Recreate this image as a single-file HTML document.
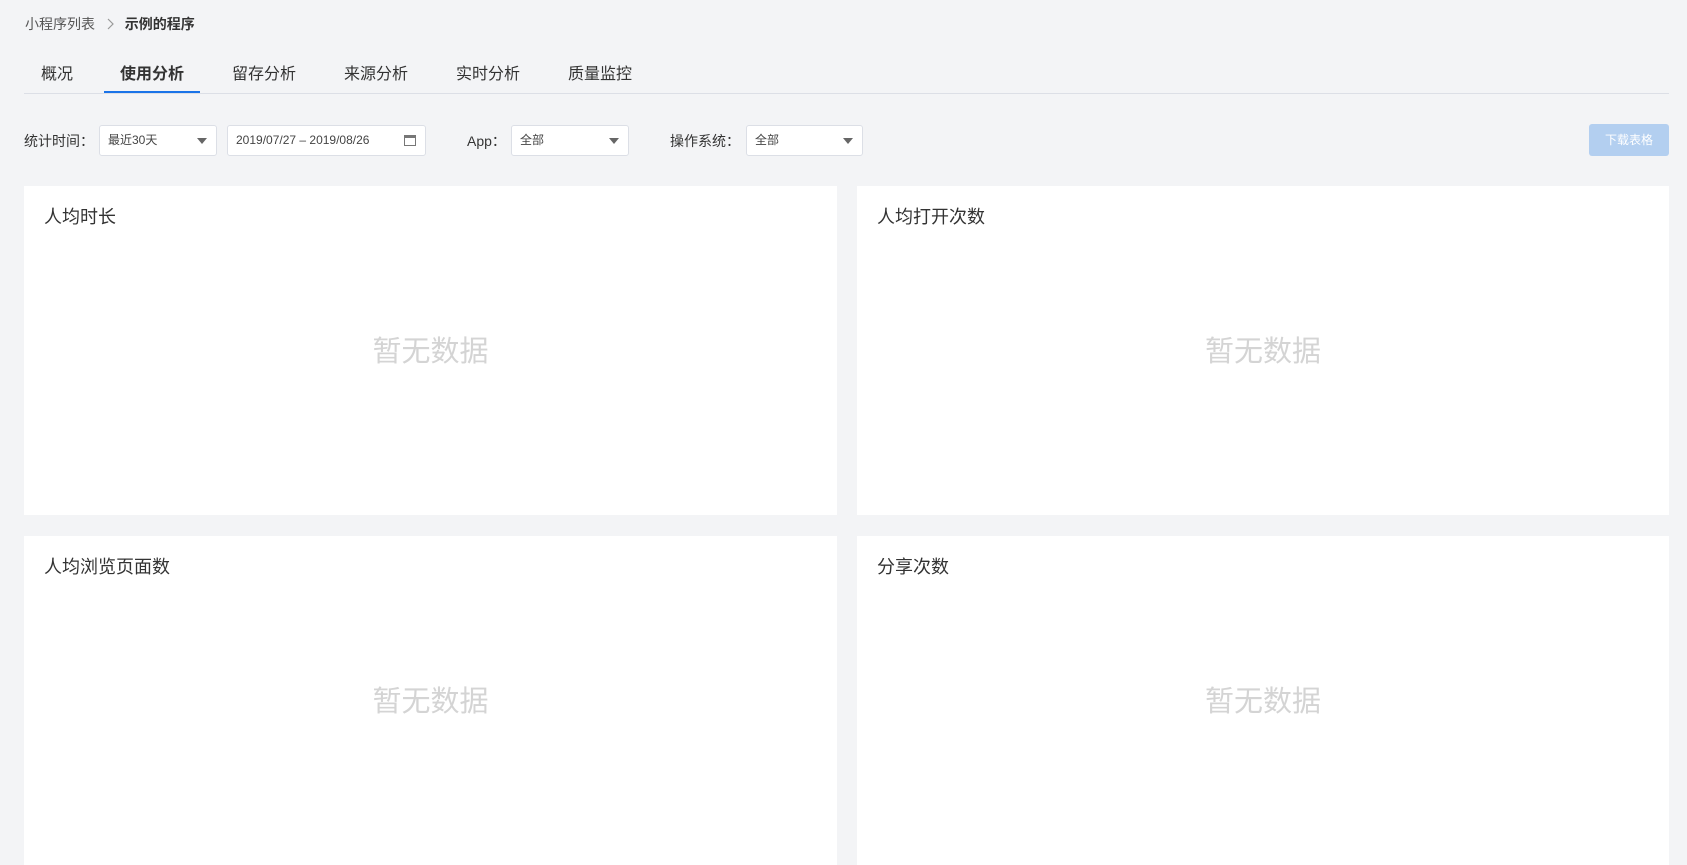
<!DOCTYPE html>
<html><head><meta charset="utf-8"><style>
*{margin:0;padding:0;box-sizing:border-box}
body{width:1687px;height:693px;overflow:hidden;background:#f3f4f6;font-family:"Liberation Sans","Noto Sans CJK SC",sans-serif;color:#333;position:relative}
.a{position:absolute;white-space:nowrap}
.bc{top:14px;left:25px;font-size:14px;color:#555}
.bc b{color:#333}
.tab{top:64px;font-size:16px;color:#333;line-height:22px}
.sel{position:absolute;top:125px;height:31px;background:#fff;border:1px solid #dcdfe6;border-radius:3px;font-size:12px;color:#444;line-height:29px;padding-left:8px}
.sel .ar{position:absolute;right:9px;top:12px;width:0;height:0;border-left:5px solid transparent;border-right:5px solid transparent;border-top:6px solid #666}
.lbl{top:131px;font-size:14px;color:#333}
.card{position:absolute;background:#fff}
.card h3{position:absolute;left:20px;top:17px;font-size:18px;font-weight:normal;color:#333}
.card .nd{position:absolute;left:0;right:0;top:142px;text-align:center;font-size:29px;color:#d4d4d4}
</style></head><body>
<div class="a bc">小程序列表 <svg width="14" height="12" viewBox="0 0 14 12" style="margin:0 4px;vertical-align:-1px"><path d="M5 1l5 5-5 5" fill="none" stroke="#999" stroke-width="1.2"/></svg> <b>示例的程序</b></div>
<div class="a tab" style="left:41px">概况</div>
<div class="a tab" style="left:120px;font-weight:bold">使用分析</div>
<div class="a tab" style="left:232px">留存分析</div>
<div class="a tab" style="left:344px">来源分析</div>
<div class="a tab" style="left:456px">实时分析</div>
<div class="a tab" style="left:568px">质量监控</div>
<div class="a" style="left:24px;top:93px;width:1645px;height:1px;background:#dcdfe6"></div>
<div class="a" style="left:104px;top:91px;width:96px;height:2px;background:#1a73e8"></div>
<div class="a lbl" style="left:24px">统计时间：</div>
<div class="sel" style="left:99px;width:118px">最近30天<span class="ar"></span></div>
<div class="sel" style="left:227px;width:199px;font-size:12px">2019/07/27 – 2019/08/26<span style="position:absolute;right:9px;top:9px;width:12px;height:11px;border:1px solid #777;border-top-width:3px"></span></div>
<div class="a lbl" style="left:467px">App：</div>
<div class="sel" style="left:511px;width:118px">全部<span class="ar"></span></div>
<div class="a lbl" style="left:670px">操作系统：</div>
<div class="sel" style="left:746px;width:117px">全部<span class="ar"></span></div>
<div class="a" style="left:1589px;top:124px;width:80px;height:32px;background:#b3cff0;border-radius:3px;color:#fff;font-size:12px;text-align:center;line-height:32px">下载表格</div>
<div class="card" style="left:24px;top:186px;width:813px;height:329px"><h3>人均时长</h3><div class="nd">暂无数据</div></div>
<div class="card" style="left:857px;top:186px;width:812px;height:329px"><h3>人均打开次数</h3><div class="nd">暂无数据</div></div>
<div class="card" style="left:24px;top:536px;width:813px;height:329px"><h3>人均浏览页面数</h3><div class="nd">暂无数据</div></div>
<div class="card" style="left:857px;top:536px;width:812px;height:329px"><h3>分享次数</h3><div class="nd">暂无数据</div></div>
</body></html>
